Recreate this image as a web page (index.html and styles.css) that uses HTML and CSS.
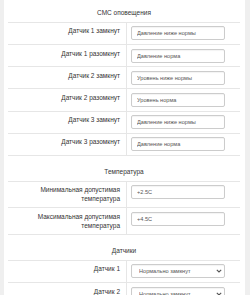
FILE: index.html
```html
<!DOCTYPE html>
<html lang="ru">
<head>
    <meta charset="UTF-8">
    <meta name="viewport" content="width=device-width, initial-scale=1.0">
    <title>Настройки</title>
    <link rel="stylesheet" href="styles.css">
</head>
<body>
    <div class="panel">
        <table class="settings">
            <tr>
                <td colspan="2" class="title first">СМС оповещения</td>
            </tr>
            <tr>
                <td class="label">Датчик 1 замкнут</td>
                <td class="field"><input type="text" value="Давление ниже нормы"></td>
            </tr>
            <tr>
                <td class="label">Датчик 1 разомкнут</td>
                <td class="field"><input type="text" value="Давление норма"></td>
            </tr>
            <tr>
                <td class="label">Датчик 2 замкнут</td>
                <td class="field"><input type="text" value="Уровень ниже нормы"></td>
            </tr>
            <tr>
                <td class="label">Датчик 2 разомкнут</td>
                <td class="field"><input type="text" value="Уровень норма"></td>
            </tr>
            <tr>
                <td class="label">Датчик 3 замкнут</td>
                <td class="field"><input type="text" value="Давление ниже нормы"></td>
            </tr>
            <tr>
                <td class="label">Датчик 3 разомкнут</td>
                <td class="field"><input type="text" value="Давление норма"></td>
            </tr>

            <tr>
                <td colspan="2" class="title">Температура</td>
            </tr>
            <tr>
                <td class="label">Минимальная допустимая температура</td>
                <td class="field"><input type="text" value="+2.5C"></td>
            </tr>
            <tr>
                <td class="label">Максимальная допустимая температура</td>
                <td class="field"><input type="text" value="+4.5C"></td>
            </tr>

            <tr>
                <td colspan="2" class="title">Датчики</td>
            </tr>
            <tr>
                <td class="label">Датчик 1</td>
                <td class="field">
                    <div class="select">
                        <select>
                            <option>Нормально замкнут</option>
                            <option>Нормально разомкнут</option>
                        </select>
                        <svg class="chev" width="6" height="4" viewBox="0 0 6 4"><path d="M0.8 0.8 L3 3 L5.2 0.8" fill="none" stroke="#555" stroke-width="1.1"/></svg>
                    </div>
                </td>
            </tr>
            <tr>
                <td class="label">Датчик 2</td>
                <td class="field">
                    <div class="select">
                        <select>
                            <option>Нормально замкнут</option>
                            <option>Нормально разомкнут</option>
                        </select>
                        <svg class="chev" width="6" height="4" viewBox="0 0 6 4"><path d="M0.8 0.8 L3 3 L5.2 0.8" fill="none" stroke="#555" stroke-width="1.1"/></svg>
                    </div>
                </td>
            </tr>
        </table>
    </div>
</body>
</html>
```

FILE: styles.css
```css
body {
    margin: 0;
    background-color: #efefef;
    font-family: "Liberation Sans", Arial, sans-serif;
    color: #333;
    overflow: hidden;
}
.panel {
    background-color: #fff;
    margin: 0 5px 0 4px;
    padding: 0 5px 0 4px;
    min-height: 295px;
}
.settings {
    width: 232px;
    border-collapse: collapse;
    font-size: 6.5px;
    line-height: 9.25px;
}
.settings td {
    border-bottom: 1px solid #e6e6e6;
    padding: 3.6px 4px;
    vertical-align: top;
}
.title {
    text-align: center;
    padding-top: 11px !important;
    padding-bottom: 4.5px !important;
}
.title.first {
    padding-top: 8px !important;
}
.label {
    width: 108px;
    text-align: right;
    padding-right: 6px !important;
    border-right: 1px solid #e6e6e6;
}
.field input, .field select {
    box-sizing: border-box;
    width: 94px;
    height: 14px;
    margin: 0;
    padding: 0 5px;
    font-family: "Liberation Sans", Arial, sans-serif;
    font-size: 5.6px;
    color: #555;
    background-color: #fff;
    border: 1px solid #ccc;
    border-radius: 2px;
    box-shadow: inset 0 1px 1px rgba(0, 0, 0, 0.05);
    display: block;
}
.select {
    position: relative;
    width: 94px;
}
.field select {
    -webkit-appearance: none;
    appearance: none;
    padding-left: 7px;
}
.chev {
    position: absolute;
    right: 3px;
    top: 5px;
}
```
